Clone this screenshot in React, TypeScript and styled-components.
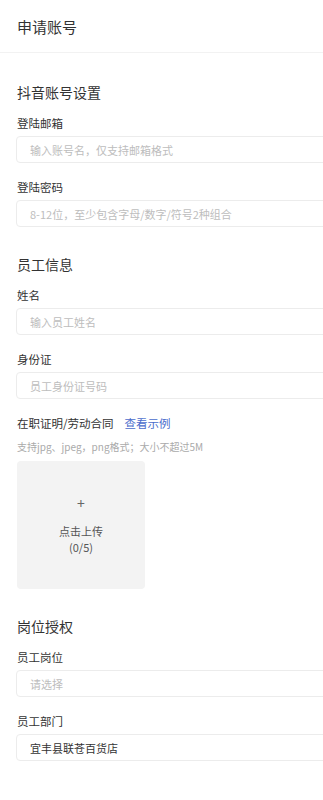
import React from 'react';
import styled, {createGlobalStyle} from 'styled-components';

const GlobalStyle = createGlobalStyle`
    body {
        margin: 0;
        background: #fff;
        font-family: "Noto Sans CJK SC", "Noto Sans", sans-serif;
        color: #333;
        overflow-x: hidden;
    }
`;

const Page = styled.div`
    width: 323px;
    overflow: hidden;
`;

const Header = styled.header`
    height: 53px;
    display: flex;
    align-items: center;
    padding-left: 17px;
    border-bottom: 1px solid #f2f2f2;
    width: 360px;
    box-sizing: border-box;
`;

const Title = styled.h1`
    margin: 0;
    font-size: 15px;
    font-weight: 400;
    color: #333;
`;

const Form = styled.div`
    padding: 29px 0 0 16px;
    display: flex;
    flex-direction: column;
`;

const Section = styled.section`
    display: flex;
    flex-direction: column;
    margin-bottom: 27px;
`;

const SectionTitle = styled.h2`
    margin: 0 0 13px;
    font-size: 14px;
    line-height: 20px;
    font-weight: 400;
    color: #333;
    padding-left: 1px;
`;

const Field = styled.div`
    display: flex;
    flex-direction: column;
    & + & {
        margin-top: 16px;
    }
`;

const LabelRow = styled.div`
    display: flex;
    align-items: center;
    gap: 11px;
    padding-left: 1px;
`;

const Label = styled.label`
    font-size: 11.5px;
    line-height: 16px;
    color: #333;
`;

const LinkText = styled.a`
    font-size: 11.5px;
    line-height: 16px;
    color: #4a6ccc;
    text-decoration: none;
`;

const Input = styled.div<{ $filled?: boolean }>`
    margin-top: 5px;
    width: 340px;
    height: 27px;
    box-sizing: border-box;
    border: 1px solid #ececec;
    border-radius: 4px;
    display: flex;
    align-items: center;
    padding-left: 13px;
    font-size: 11px;
    color: ${p => (p.$filled ? '#333' : '#bdbdbd')};
`;

const Hint = styled.div`
    margin-top: 9px;
    font-size: 10px;
    line-height: 14px;
    color: #aaa;
    padding-left: 1px;
`;

const Upload = styled.div`
    margin-top: 7px;
    margin-left: 1px;
    width: 128px;
    height: 128px;
    border-radius: 4px;
    background: #f3f3f3;
    display: flex;
    flex-direction: column;
    align-items: center;
    justify-content: center;
    color: #555;
`;

const Plus = styled.div`
    font-size: 14px;
    line-height: 16px;
    margin-bottom: 12px;
    color: #666;
`;

const UploadText = styled.div`
    font-size: 11px;
    line-height: 16px;
    text-align: center;
`;

type FieldProps = { label: string; value: string; filled?: boolean };

const FormField = ({label, value, filled}: FieldProps) => (
    <Field>
        <LabelRow><Label>{label}</Label></LabelRow>
        <Input $filled={filled}>{value}</Input>
    </Field>
);

const App = () => {
    return (
        <Page>
            <GlobalStyle/>
            <Header>
                <Title>申请账号</Title>
            </Header>
            <Form>
                <Section>
                    <SectionTitle>抖音账号设置</SectionTitle>
                    <FormField label="登陆邮箱" value="输入账号名，仅支持邮箱格式"/>
                    <FormField label="登陆密码" value="8-12位，至少包含字母/数字/符号2种组合"/>
                </Section>
                <Section>
                    <SectionTitle>员工信息</SectionTitle>
                    <FormField label="姓名" value="输入员工姓名"/>
                    <FormField label="身份证" value="员工身份证号码"/>
                    <Field>
                        <LabelRow>
                            <Label>在职证明/劳动合同</Label>
                            <LinkText>查看示例</LinkText>
                        </LabelRow>
                        <Hint>支持jpg、jpeg，png格式；大小不超过5M</Hint>
                        <Upload>
                            <Plus>+</Plus>
                            <UploadText>点击上传</UploadText>
                            <UploadText>(0/5)</UploadText>
                        </Upload>
                    </Field>
                </Section>
                <Section>
                    <SectionTitle>岗位授权</SectionTitle>
                    <FormField label="员工岗位" value="请选择"/>
                    <FormField label="员工部门" value="宜丰县联苍百货店" filled/>
                </Section>
            </Form>
        </Page>
    );
};

export default App;
